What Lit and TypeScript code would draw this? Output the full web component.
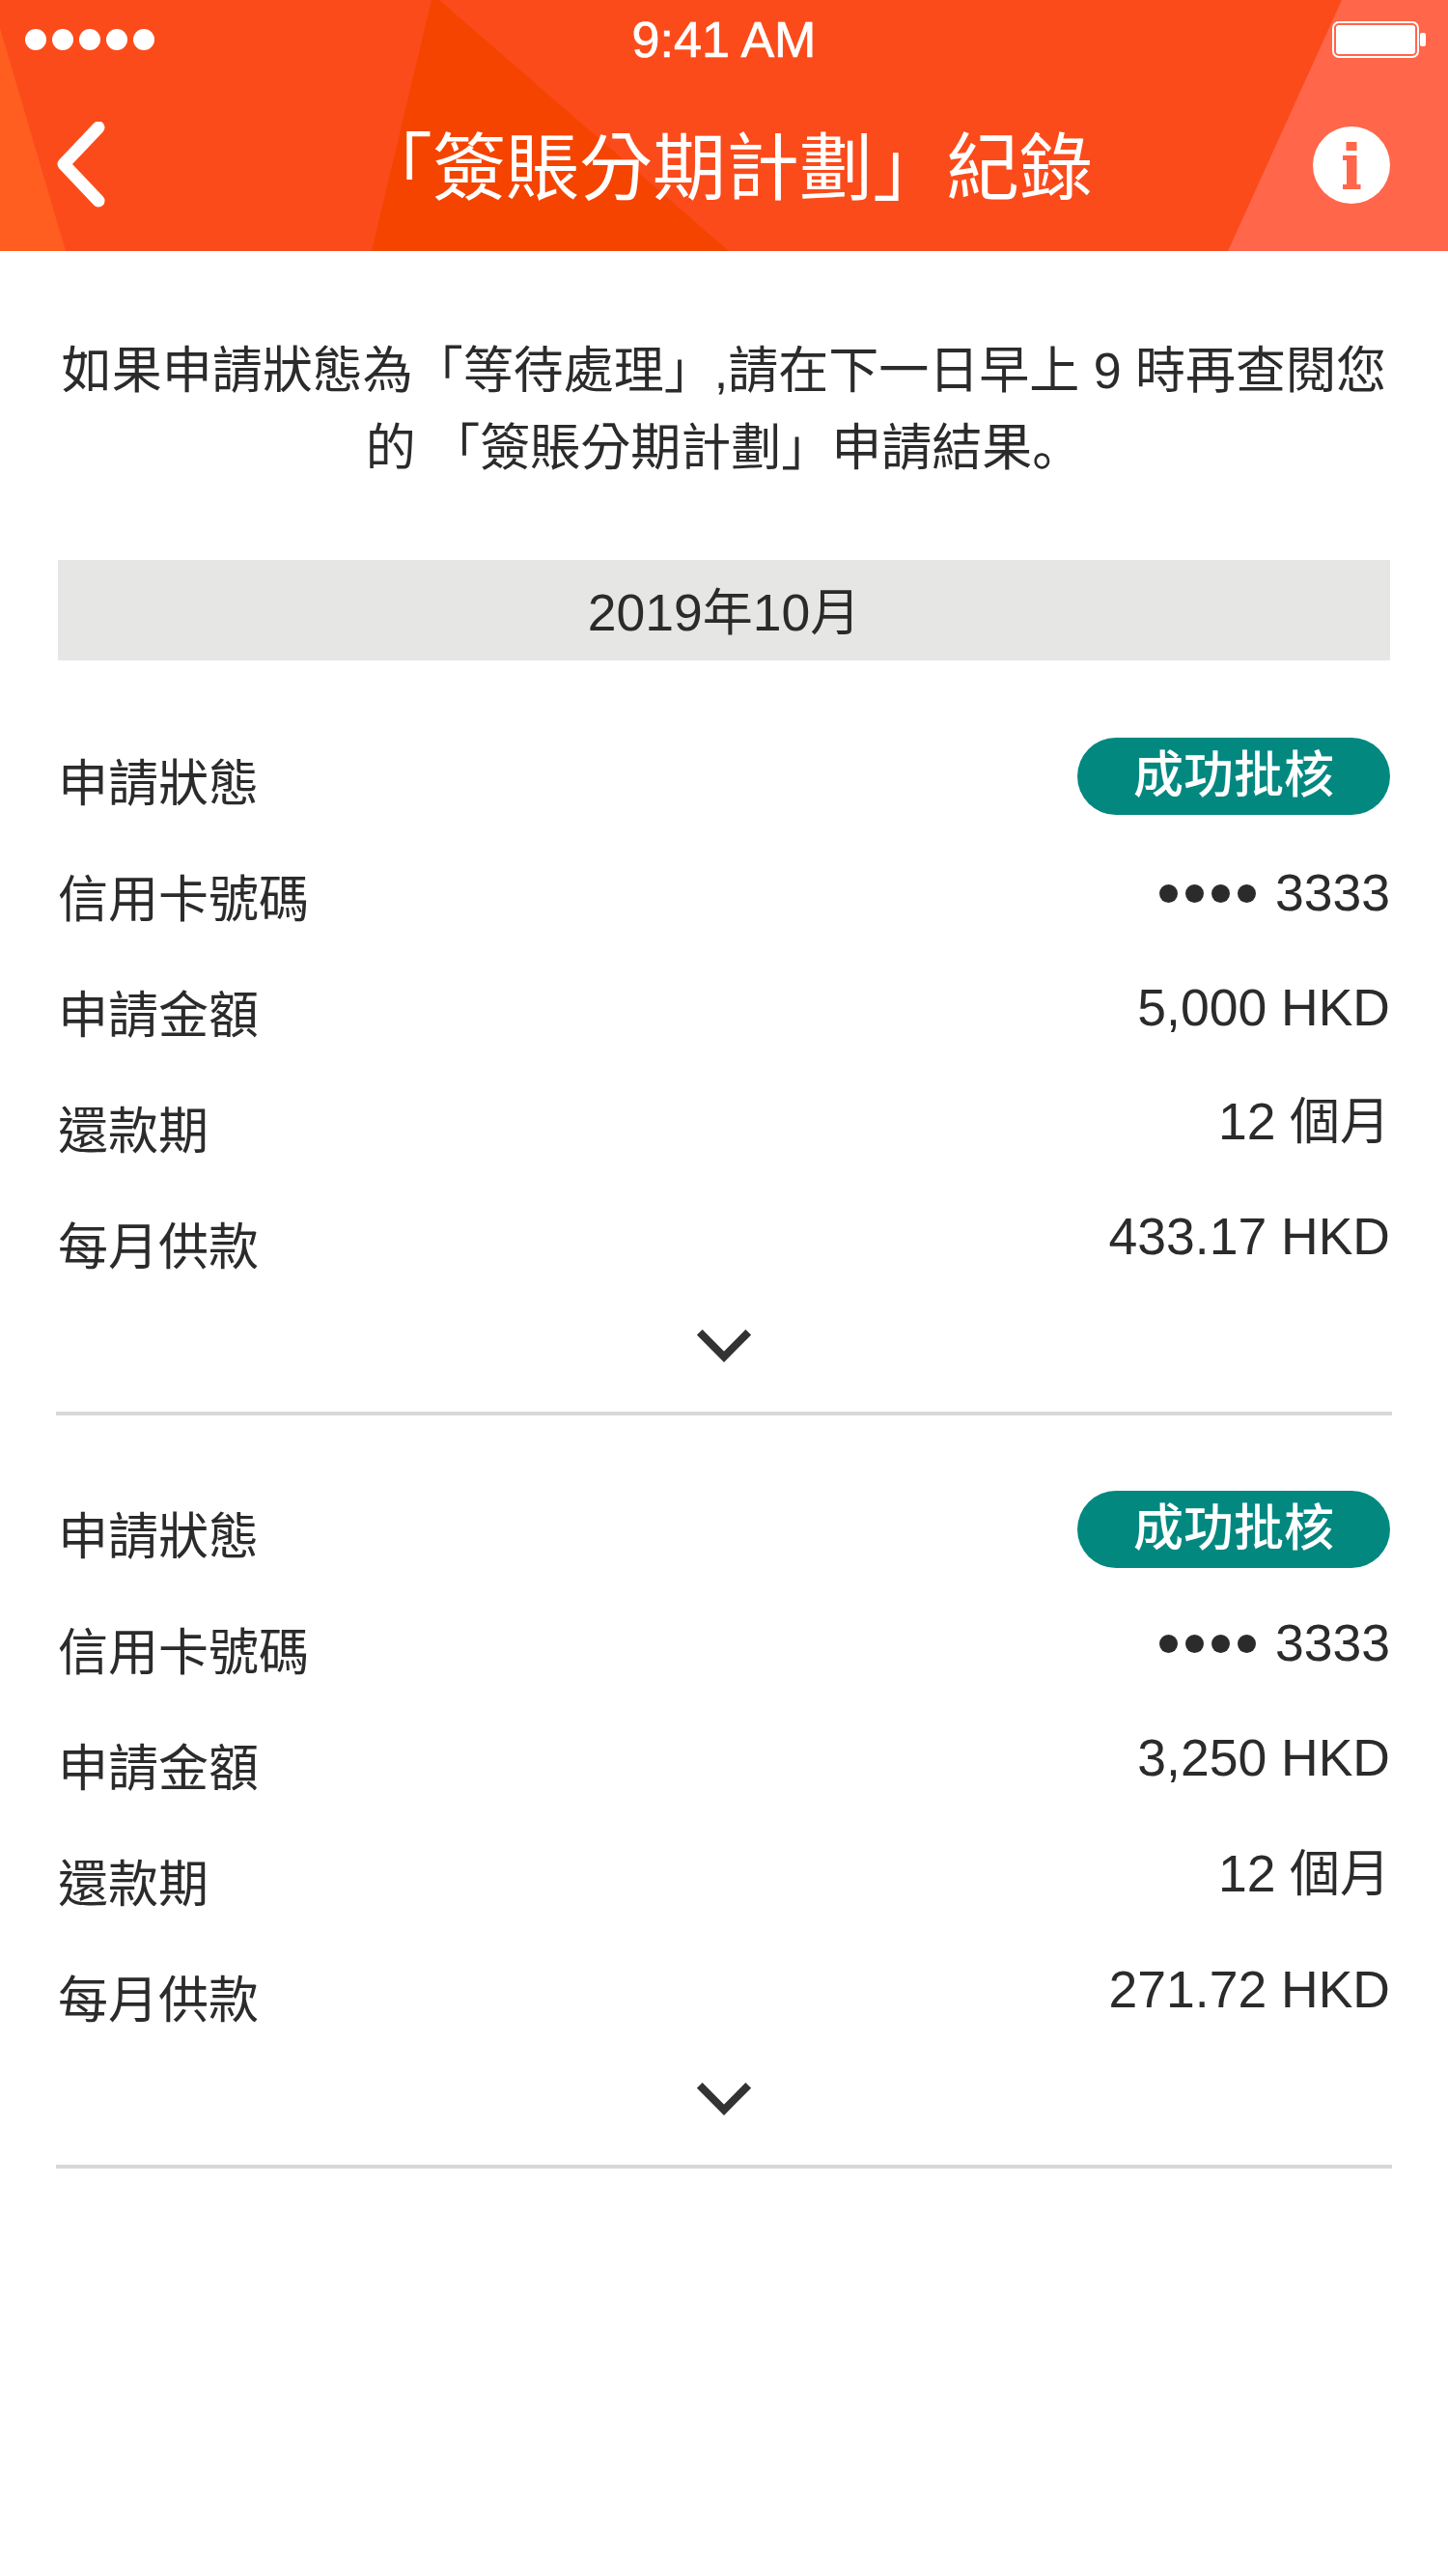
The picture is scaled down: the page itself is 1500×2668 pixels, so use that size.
import { LitElement, html, css, svg } from 'lit';
import { customElement } from 'lit/decorators.js';

const records = [
  { amount: '5,000 HKD', term: '12', monthly: '433.17 HKD' },
  { amount: '3,250 HKD', term: '12', monthly: '271.72 HKD' },
];

const labels = ['申請狀態', '信用卡號碼', '申請金額', '還款期', '每月供款'];

@customElement('app-root')
export class AppRoot extends LitElement {
  static styles = css`
    :host {
      display: block;
      width: 1500px;
      min-height: 2668px;
      background: #fff;
      color: #2b2b2b;
      font-family: "Liberation Sans", "Noto Sans CJK TC", sans-serif;
      font-size: 52px;
    }

    .header {
      position: relative;
      height: 260px;
      background: #fb4b1b;
      color: #fff;
      overflow: hidden;
    }

    .header-bg {
      position: absolute;
      inset: 0;
    }

    .status,
    .nav {
      position: relative;
      display: grid;
      grid-template-columns: 1fr auto 1fr;
      align-items: center;
    }

    .status {
      height: 82px;
      padding: 0 22px 0 26px;
    }

    .signal {
      display: flex;
      gap: 6px;
    }

    .signal span {
      width: 22px;
      height: 22px;
      border-radius: 50%;
      background: #fff;
    }

    .time {
      font-size: 52px;
      line-height: 80px;
      margin-right: 4px;
      -webkit-text-stroke: 0.7px #fff;
    }

    .battery {
      justify-self: end;
      display: block;
    }

    .nav {
      height: 178px;
      padding: 0 60px 0 58px;
    }

    .back {
      display: block;
    }

    .title {
      font-size: 76px;
      font-weight: 400;
      line-height: 100px;
      margin: 8px 0 0 6px;
      white-space: nowrap;
    }

    .info {
      justify-self: end;
      display: block;
    }

    .content {
      padding: 0 60px;
    }

    .intro {
      margin: 0;
      padding-top: 84px;
      line-height: 80px;
      text-align: center;
      white-space: nowrap;
    }

    .stop {
      font-family: "Noto Sans CJK SC", sans-serif;
      line-height: 0;
    }

    .num {
      font-size: 53.5px;
    }

    .date {
      margin-top: 76px;
      margin-bottom: 2px;
      height: 104px;
      line-height: 110px;
      background: #e6e6e4;
      text-align: center;
    }

    .record {
      margin: 0 -2px;
      padding: 63px 2px 0;
      border-bottom: 4px solid #d8d8d6;
    }

    .fields {
      display: flex;
      justify-content: space-between;
    }

    .labels {
      padding-top: 3px;
      margin-bottom: -3px;
    }

    .labels div {
      line-height: 120px;
      height: 120px;
    }

    .values {
      padding-top: 15px;
      text-align: right;
    }

    .values div {
      height: 118.500px;
      line-height: 118px;
    }

    .values .badge {
      width: 324px;
      height: 80px;
      margin-bottom: 22px;
      border-radius: 40px;
      background: #038880;
      color: #fff;
      font-weight: 500;
      line-height: 78px;
      text-align: center;
    }

    .second .values .badge {
      margin-bottom: 18px;
    }

    .second .values div:not(.badge) {
      height: 120px;
    }

    .values .card {
      display: flex;
      align-items: center;
      justify-content: flex-end;
    }

    .dots {
      display: flex;
      gap: 8px;
      margin-right: 20px;
    }

    .dots span {
      width: 19px;
      height: 19px;
      border-radius: 50%;
      background: #2b2b2b;
    }

    .more {
      display: block;
      margin: 28px auto 51px;
    }
  `;

  private renderRecord(r: { amount: string; term: string; monthly: string }, i: number) {
    return html`
      <div class="record ${i === 1 ? 'second' : ''}">
        <div class="fields">
          <div class="labels">
            ${labels.map((l) => html`<div>${l}</div>`)}
          </div>
          <div class="values">
            <div class="badge">成功批核</div>
            <div class="card">
              <span class="dots"><span></span><span></span><span></span><span></span></span><span class="num">3333</span>
            </div>
            <div><span class="num">${r.amount}</span></div>
            <div><span class="num">${r.term}</span> 個月</div>
            <div><span class="num">${r.monthly}</span></div>
          </div>
        </div>
        <svg class="more" width="56" height="34" viewBox="0 0 56 34">
          <path d="M2.800 2.800 L28 28.300 L53.200 2.800" fill="none" stroke="#333" stroke-width="8"></path>
        </svg>
      </div>
    `;
  }

  render() {
    return html`
      <div class="header">
        <svg class="header-bg" width="1500" height="260" viewBox="0 0 1500 260">
          ${svg`
            <polygon points="0,29 68,260 0,260" fill="#ff5e20"></polygon>
            <polygon points="447,0 455,0 755,260 385,260" fill="#f44400"></polygon>
            <polygon points="1390,0 1500,0 1500,260 1272,260" fill="#ff664a"></polygon>
          `}
        </svg>
        <div class="status">
          <div class="signal"><span></span><span></span><span></span><span></span><span></span></div>
          <div class="time">9:41 AM</div>
          <svg class="battery" width="98" height="38" viewBox="0 0 98 38">
            <rect x="1" y="1" width="88" height="36" rx="6" fill="none" stroke="#fff" stroke-width="2"></rect>
            <rect x="4" y="4" width="82" height="30" rx="3" fill="#fff"></rect>
            <rect x="91" y="12" width="6" height="14" rx="2" fill="#fff"></rect>
          </svg>
        </div>
        <div class="nav">
          <svg class="back" width="60" height="90" viewBox="0 0 60 90">
            <path d="M44 6 L8 44 L44 82" fill="none" stroke="#fff" stroke-width="13" stroke-linecap="round" stroke-linejoin="round"></path>
          </svg>
          <div class="title">「簽賬分期計劃」紀錄</div>
          <svg class="info" width="80" height="80" viewBox="0 0 80 80">
            <circle cx="40" cy="40" r="40" fill="#fff"></circle>
            <path d="M34.500 16h11v9h-11z M31 30h14.500v30h4v5h-18.500v-5h4v-25h-4z" fill="#ff664a"></path>
          </svg>
        </div>
      </div>
      <div class="content">
        <p class="intro">如果申請狀態為「等待處理」,請在下一日早上 9 時再查閱您<br />的 「簽賬分期計劃」申請結果<span class="stop">。</span></p>
        <div class="date"><span class="num">2019</span>年<span class="num">10</span>月</div>
        ${records.map((r, i) => this.renderRecord(r, i))}
      </div>
    `;
  }
}
